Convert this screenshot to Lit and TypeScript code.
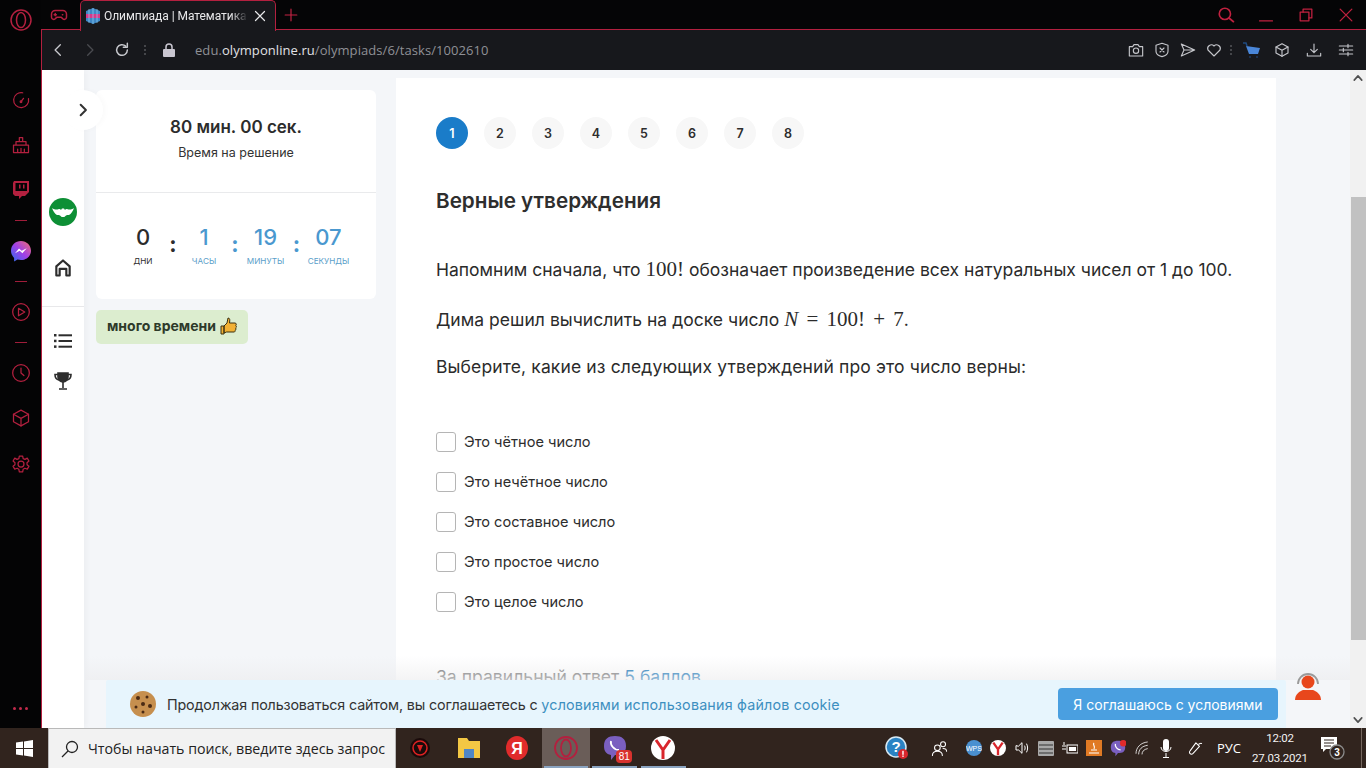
import { LitElement, html, svg, css } from "lit";
import { customElement } from "lit/decorators.js";

const ic = (w: number, body: any, vb = 24) =>
  html`<svg width="${w}" height="${w}" viewBox="0 0 ${vb} ${vb}" fill="none" stroke="currentColor" stroke-width="1.5" stroke-linecap="round" stroke-linejoin="round">${body}</svg>`;

const P = (d: string) => svg`<path d="${d}"></path>`;

const cubePath = svg`<path d="M12 2.5 21 7.5V16.5L12 21.500 3 16.5V7.5Z"></path><path d="M3 7.5 12 12.500 21 7.5M12 12.500V21.500"></path>`;

const gear = svg`<circle cx="12" cy="12" r="3.6"></circle><path d="M10 2.5h4l.6 3 2.2 1 2.7-1.500 2 3.400-2.300 2 .1 2.400 2.200 2-2 3.400-2.800-1.100-2.100 1.300-.6 3h-4l-.6-3-2.100-1.300-2.800 1.100-2-3.400 2.200-2 .1-2.400-2.300-2 2-3.400 2.700 1.500 2.200-1z"></path>`;

@customElement("app-root")
export class AppRoot extends LitElement {
  static styles = css`
    :host { display: block; width: 1366px; height: 768px; overflow: hidden; position: relative; font-family: "Inter", "Noto Sans", sans-serif; color: #2b2b2b; background: #050506; }
    * { box-sizing: border-box; }
    .browser { height: 728px; display: flex; }
    .rail { width: 41px; flex: none; background: #040405; color: #b3203f; display: flex; flex-direction: column; align-items: center; }
    .rail-logo { margin-top: 7px; height: 26px; color: #b3203f; }
    .rail-list { display: flex; flex-direction: column; align-items: center; margin-top: 44px; }
    .rail-item { height: 45px; width: 41px; display: flex; align-items: center; justify-content: center; }
    .rail-line { width: 12px; height: 1px; background: #a01d3a; }
    .rail-tall { height: 60px; width: 41px; display: flex; align-items: center; justify-content: center; }
    .rail-tw { height: 45px; margin-bottom: 8px; }
    .rail-cube { height: 30px; }
    .rail-gear { height: 62px; }
    .rail-dots { margin-top: auto; margin-bottom: 18px; display: flex; gap: 3px; }
    .rail-dots i { width: 3px; height: 3px; border-radius: 50%; background: #c22a4b; }
    .win { flex: 1; display: flex; flex-direction: column; min-width: 0; }
    .tabs { height: 30px; flex: none; display: flex; align-items: stretch; position: relative; }
    .tabs::after { content: ""; position: absolute; left: 0; right: 0; bottom: 0; height: 1px; background: #b3203f; }
    .game { width: 39px; display: flex; align-items: center; justify-content: center; color: #b3203f; padding-right: 3px; }
    .game svg { stroke-width: 2; }
    .tab { width: 196px; background: #17181c; border: 1px solid #b3203f; border-bottom: none; border-radius: 5px 5px 0 0; display: flex; align-items: center; padding: 0 6px 0 4px; position: relative; z-index: 1; font: 12px "Roboto", sans-serif; letter-spacing: -0.05px; color: #e8e8ea; white-space: nowrap; height: 31px; }
    .tab-t { width: 144px; overflow: hidden; margin-left: 3px; -webkit-mask-image: linear-gradient(90deg, #000 88%, transparent); mask-image: linear-gradient(90deg, #000 88%, transparent); }
    .tab-x { margin-left: 6px; color: #e8e8ea; display: flex; }
    .tab-x svg { stroke-width: 2.4; }
    .plus { width: 30px; display: flex; align-items: center; justify-content: center; color: #c32343; }
    .plus svg { stroke-width: 2; }
    .winbtns { margin-left: auto; display: flex; color: #c0213f; align-items: center; }
    .winbtn { width: 40px; height: 29px; display: flex; align-items: center; justify-content: center; }
    .winbtn svg { stroke-width: 2.2; }
    .addr { height: 40px; flex: none; background: #17181c; border-left: 1px solid #b3203f; color: #c8c9ce; display: flex; align-items: center; }
    .nav-b { width: 32px; display: flex; justify-content: center; }
    .nav-b svg { stroke-width: 2.2; }
    .dim { color: #4a4b50; }
    .vdots { width: 14px; display: flex; flex-direction: column; gap: 2px; align-items: center; }
    .vdots i { width: 2px; height: 2px; background: #45464a; }
    .lock { width: 34px; display: flex; justify-content: center; color: #c9c6d0; }
    .url { font: 13px "Open Sans", sans-serif; color: #8f9096; margin-left: 9px; letter-spacing: 0.07px; }
    .url b { font-weight: 400; color: #e2e2e6; }
    .tools { margin-left: auto; display: flex; align-items: center; color: #c5c6cb; padding-right: 4px; }
    .tool { width: 26px; display: flex; justify-content: center; }
    .tool svg { stroke-width: 1.7; }
    .tool.w { width: 32px; }
    .tool.cart { width: 28px; margin-left: 3px; }
    .vdots.sm { width: 8px; }
    .page { flex: 1; min-height: 0; display: flex; position: relative; border-left: 1px solid #b3203f; background: #f4f6f9; overflow: hidden; }
    .side { width: 42px; flex: none; background: #fff; display: flex; flex-direction: column; align-items: center; box-shadow: 2px 0 6px rgba(0,0,0,.04); color: #2d2d2d; }
    .ava { width: 28px; height: 28px; border-radius: 50%; background: #0d8f35; margin-top: 128px; display: flex; align-items: center; justify-content: center; }
    .side-home { margin-top: 30px; height: 24px; display: flex; align-items: center; }
    .side-home svg { stroke-width: 2.6; }
    .side-div { width: 100%; height: 1px; background: #e8e8ea; margin-top: 26px; }
    .side-list { margin-top: 24px; height: 20px; display: flex; align-items: center; }
    .side-cup { margin-top: 21px; display: flex; }
    .bubble { position: absolute; left: 21px; top: 20px; width: 40px; height: 40px; border-radius: 50%; background: #fff; display: flex; align-items: center; justify-content: center; box-shadow: 3px 0 5px rgba(0,0,0,.02); z-index: 2; color: #333; }
    .bubble svg { stroke-width: 3.4; }
    .col { width: 280px; margin-left: 12px; padding-top: 20px; flex: none; }
    .card { background: #fff; border-radius: 6px; height: 209px; }
    .card-top { height: 103px; border-bottom: 1px solid #e9eaec; padding-top: 25px; text-align: center; }
    .time { font-size: 17px; line-height: 24px; font-weight: 600; color: #2c2c2c; }
    .time-s { font-size: 12.500px; line-height: 18px; margin-top: 5px; color: #333; }
    .count { display: grid; grid-template-columns: 30px 30px 32px 30px 31px 31px 33px 30px; justify-content: start; padding: 30px 0 0 32px; align-items: start; }
    .cell { display: flex; flex-direction: column; align-items: center; justify-self: center; width: 30px; }
    .num { font-size: 22px; line-height: 28px; font-weight: 500; color: #2c2c2c; }
    .lab { font-size: 8.200px; line-height: 12px; margin-top: 4px; white-space: nowrap; text-transform: uppercase; color: #2c2c2c; }
    .blue .num { color: #4a98cf; }
    .blue .lab { color: #5a9ec9; }
    .colon { font-size: 22px; font-weight: 700; line-height: 28px; text-align: center; padding-top: 7px; color: #2c2c2c; }
    .colon.blue { color: #4a98cf; }
    .badge { margin-top: 11px; width: 152px; height: 34px; background: #dcedcf; border-radius: 5px; display: flex; align-items: center; gap: 4px; padding: 0 0 3px 11px; font-size: 14px; font-weight: 700; color: #2e3a2a; white-space: nowrap; }
    .task { width: 880px; margin-left: 20px; margin-top: 8px; flex: none; background: #fff; padding: 39px 40px 0; }
    .steps { display: flex; gap: 16px; }
    .step { width: 32px; height: 32px; border-radius: 50%; background: #f7f7f7; display: flex; align-items: center; justify-content: center; font-size: 12.500px; font-weight: 600; color: #2d2d2d; }
    .step.on { background: #1a7cc9; color: #fff; }
    h1 { margin: 37px 0 0; font-size: 20.700px; line-height: 30px; font-weight: 600; color: #2e2e2e; }
    .p { font-size: 17.500px; line-height: 28px; color: #2b2b2b; white-space: nowrap; letter-spacing: 0.03px; }
    .p .m { font-family: "Liberation Serif", serif; font-size: 21px; letter-spacing: 0; word-spacing: 3px; }
    .p1 { margin-top: 39px; letter-spacing: 0; }
    .p2 { margin-top: 21px; }
    .p3 { margin-top: 19px; letter-spacing: 0.13px; }
    .opts { margin-top: 51px; display: flex; flex-direction: column; gap: 20px; }
    .opt { display: flex; align-items: center; gap: 8px; height: 20px; font-size: 14.600px; color: #2d2d2d; }
    .box { width: 20px; height: 20px; border: 1px solid #b5b5b5; border-radius: 3px; background: #fff; }
    .foot { margin-top: 53px; font-size: 17.600px; line-height: 24px; color: #6a6a6a; white-space: nowrap; }
    .foot span { color: #0a6fb5; }
    .fade { position: absolute; left: 43px; right: 16px; bottom: 48px; height: 24px; background: linear-gradient(rgba(240,240,240,0), rgba(236,236,238,.6)); pointer-events: none; }
    .cookie { position: absolute; left: 64px; bottom: 0; width: 1180px; height: 48px; background: #e7f5fd; display: flex; align-items: center; padding: 0 8px 0 24px; font-size: 14.300px; color: #333; border-radius: 2px 2px 0 0; }
    .cookie-t { margin-left: 11px; white-space: nowrap; letter-spacing: -0.14px; }
    .cookie-t a { color: #3d8fc0; letter-spacing: 0.19px; }
    .agree { margin-left: auto; width: 220px; height: 32px; background: #4a9fe0; color: #fff; border-radius: 4px; display: flex; align-items: center; justify-content: center; font-size: 14px; }
    .support { position: absolute; left: 1252px; top: 599px; display: flex; }
    .sb { width: 16px; flex: none; margin-left: auto; background: #f1f1f1; display: flex; flex-direction: column; align-items: center; color: #505050; }
    .sb-u { height: 16px; display: flex; align-items: center; }
    .sb-u svg, .sb-d svg { stroke-width: 4; }
    .sb-gap { height: 111px; }
    .sb-th { width: 15px; height: 443px; background: #c1c1c1; }
    .sb-d { margin-top: auto; height: 16px; display: flex; align-items: center; }
    .bar { height: 40px; background: #31241e; display: flex; align-items: stretch; color: #fff; }
    .start { width: 48px; display: flex; align-items: center; justify-content: center; }
    .search { width: 348px; background: #f2f2f2; border: 1px solid #b9b9b9; border-bottom: none; display: flex; align-items: center; padding-left: 12px; gap: 9px; color: #222; font: 14.200px "Open Sans", sans-serif; white-space: nowrap; overflow: hidden; }
    .apps { display: flex; }
    .app { width: 48.600px; display: flex; align-items: center; justify-content: center; position: relative; }
    .app.open::after { content: ""; position: absolute; left: 2px; right: 2px; bottom: 0; height: 2px; background: #8aa3c0; }
    .app.act { background: #6a5d58; }
    .bdg { position: absolute; left: 26px; top: 22px; width: 16px; height: 13px; border-radius: 4px; background: #d8322e; color: #fff; font: 10px "Liberation Sans", sans-serif; text-align: center; line-height: 13px; }
    .tray { margin-left: auto; display: flex; align-items: center; padding-right: 4px; }
    .t { width: 24px; display: flex; justify-content: center; align-items: center; position: relative; }
    .t-help { margin-right: 18px; }
    .t-ppl { margin-right: 11px; }
    .t-pen { width: 32px; }
    .t-lang { width: 38px; font: 13px "Open Sans", sans-serif; text-align: center; }
    .clock { width: 64px; margin-right: 6px; text-align: center; font: 11.500px/20px "Roboto", sans-serif; letter-spacing: -0.2px; color: #f2f2f2; white-space: nowrap; }
    .t-note { width: 30px; }
    .desk { width: 1px; height: 40px; background: #75675f; margin-left: 13px; }
  `;

  private sideIcons() {
    return html`
      <div class="rail-list">
        <div class="rail-item">${ic(20, svg`<path d="M14 3.300a9 9 0 1 0 7 7"></path><path d="M12 14l3-4"></path><circle cx="12" cy="14" r="1"></circle>`)}</div>
        <div class="rail-item">${ic(20, svg`<path d="M3 21V12h18v9zM6 12V8h12v4M10 8V3h4v5M8 21v-4M12 21v-5M16 21v-4"></path>`)}</div>
        <div class="rail-item rail-tw">
          <svg width="18" height="20" viewBox="0 0 18 20"><path fill="#b3203f" d="M2 1h15v11l-4 4h-3l-3 3v-3H3L1 14V3z"></path><rect x="3.500" y="3" width="11.500" height="8" fill="#040405"></rect><rect x="7" y="4.500" width="1.500" height="4" fill="#b3203f"></rect><rect x="11" y="4.500" width="1.500" height="4" fill="#b3203f"></rect></svg>
        </div>
        <div class="rail-line"></div>
        <div class="rail-tall">
          <svg width="20" height="21" viewBox="0 0 20 21"><defs><linearGradient id="ms" x1="0" y1="1" x2="1" y2="0"><stop offset="0" stop-color="#2b6ff0"></stop><stop offset=".5" stop-color="#a040e8"></stop><stop offset="1" stop-color="#f36f70"></stop></linearGradient></defs><path fill="url(#ms)" d="M10 0C4.400 0 0 4.100 0 9.700c0 2.900 1.200 5.400 3.100 7.200V20.500l3.400-1.900c1.100.3 2.300.5 3.500.5 5.600 0 10-4.100 10-9.400S15.600 0 10 0z"></path><path fill="#fff" d="M4 12.300 8 7.500l2.700 2.300L15.700 7.200l-4.300 5-2.700-2.400z"></path></svg>
        </div>
        <div class="rail-line"></div>
        <div class="rail-tall">${ic(20, svg`<circle cx="12" cy="12" r="10"></circle><path d="M9 7.500 16.500 12 9 16.500z"></path>`)}</div>
        <div class="rail-line"></div>
        <div class="rail-tall">${ic(20, svg`<circle cx="12" cy="12" r="10"></circle><path d="M12 6v6l3.500 3"></path>`)}</div>
        <div class="rail-item rail-cube">${ic(20, cubePath)}</div>
        <div class="rail-item rail-gear">${ic(20, gear)}</div>
      </div>
      <div class="rail-dots"><i></i><i></i><i></i></div>`;
  }

  render() {
    const opts = ["Это чётное число", "Это нечётное число", "Это составное число", "Это простое число", "Это целое число"];
    const steps = [1, 2, 3, 4, 5, 6, 7, 8];
    return html`
      <div class="browser">
        <div class="rail">
          <div class="rail-logo">
            <svg width="26" height="26" viewBox="0 0 26 26" fill="none" stroke="#b3203f" stroke-width="1.500"><circle cx="13" cy="13" r="10"></circle><ellipse cx="13" cy="13" rx="4.500" ry="7.500"></ellipse></svg>
          </div>
          ${this.sideIcons()}
        </div>
        <div class="win">
          <div class="tabs">
            <div class="game">${ic(18, svg`<path d="M7 6h10a5 5 0 0 1 5 5v4a3 3 0 0 1-5.500 1.500L15 15H9l-1.500 1.500A3 3 0 0 1 2 15v-4a5 5 0 0 1 5-5z"></path><path d="M7 10v3M5.500 11.500h3M16.500 11.500h.5"></path>`)}</div>
            <div class="tab">
              <svg width="16" height="16" viewBox="0 0 16 16"><path fill="#3e86c5" d="M8 0l7 3v10l-7 3-7-3V3z"></path><rect x="1" y="6" width="14" height="4" fill="#d8388a"></rect><path stroke="#8fd0f0" stroke-width=".7" d="M4 1v14M8 0v16M12 1v14"></path></svg>
              <div class="tab-t">Олимпиада | Математика</div>
              <div class="tab-x">${ic(12, P("M3 3 21 21M21 3 3 21"))}</div>
            </div>
            <div class="plus">${ic(14, P("M12 2v20M2 12h20"))}</div>
            <div class="winbtns">
              <div class="winbtn">${ic(18, svg`<circle cx="10.500" cy="10.500" r="7.500"></circle><path d="M16 16l6 5"></path>`)}</div>
              <div class="winbtn">${ic(14, P("M1 22h22"))}</div>
              <div class="winbtn">${ic(14, svg`<rect x="2" y="7" width="15" height="15"></rect><path d="M7 7V2h15v15h-5"></path>`)}</div>
              <div class="winbtn">${ic(14, P("M2 2 22 22M22 2 2 22"))}</div>
            </div>
          </div>
          <div class="addr">
            <div class="nav-b">${ic(14, P("M16 3 7 12l9 9"))}</div>
            <div class="nav-b dim">${ic(14, P("M8 3l9 9-9 9"))}</div>
            <div class="nav-b">${ic(16, svg`<path d="M20 12a8 8 0 1 1-2.500-5.800"></path><path d="M20 2v6h-6"></path>`)}</div>
            <div class="vdots"><i></i><i></i><i></i></div>
            <div class="lock">
              <svg width="12" height="14" viewBox="0 0 12 14"><path fill="none" stroke="currentColor" stroke-width="1.500" d="M3 7V4a3 3 0 0 1 6 0v3"></path><rect y="6" width="12" height="8" rx="1" fill="currentColor"></rect></svg>
            </div>
            <div class="url">edu.<b>olymponline.ru</b>/olympiads/6/tasks/1002610</div>
            <div class="tools">
              <div class="tool">${ic(16, svg`<path d="M2 7h5l2-3h6l2 3h5v14H2z"></path><circle cx="12" cy="13" r="4"></circle>`)}</div>
              <div class="tool">${ic(16, svg`<path d="M12 2l9 3v9c0 4-4 7-9 8-5-1-9-4-9-8V5z"></path><path d="M9 9l6 6M15 9l-6 6"></path>`)}</div>
              <div class="tool">${ic(16, P("M2 3l20 9-20 9 4-9zM6 12h16"))}</div>
              <div class="tool">${ic(16, P("M12 21 3 12a5.500 5.500 0 0 1 9-6 5.500 5.500 0 0 1 9 6z"))}</div>
              <div class="vdots sm"><i></i><i></i><i></i></div>
              <div class="tool cart">
                <svg width="18" height="16" viewBox="0 0 18 16"><path fill="#4a86d8" d="M3 4l14 2-2 6H6z"></path><path stroke="#1f4a80" stroke-width="1.500" fill="none" d="M0 1h3l1 3"></path><circle cx="7" cy="15" r="1" fill="#1f3a60"></circle><circle cx="14" cy="15" r="1" fill="#1f3a60"></circle></svg>
              </div>
              <div class="tool w">${ic(16, cubePath)}</div>
              <div class="tool w">${ic(16, P("M12 3v13M7 11l5 5 5-5M2 17v4h20v-4"))}</div>
              <div class="tool w">${ic(16, P("M2 6h20M2 12h20M2 18h20M15 3.500v5M8 9.500v5M15 15.500v5"))}</div>
            </div>
          </div>
          <div class="page">
            <div class="side">
              <div class="ava">
                <svg width="22" height="10" viewBox="0 0 22 10"><path fill="#fff" d="M0 1c2 1.500 4 2 7 1 .8-.3 1.500.3 2 1l1-1.500h2l1 1.500c.5-.7 1.200-1.300 2-1 3 1 5 .5 7-1-1 3-3 6-5 7-2 0-2 0-3 .5-1 1-2 2-3 2s-2-1-3-2c-1-.5-1-.5-3-.5C3 7 1 4 0 1z"></path></svg>
              </div>
              <div class="side-home">${ic(20, P("M4 21V10l8-7 8 7v11h-4v-8H8v8z"))}</div>
              <div class="side-div"></div>
              <div class="side-list">
                <svg width="18" height="14" viewBox="0 0 18 14" fill="#2d2d2d"><rect width="2.500" height="2.500" y="0"></rect><rect x="4.500" y=".3" width="13.500" height="2"></rect><rect width="2.500" height="2.500" y="5.700"></rect><rect x="4.500" y="6" width="13.500" height="2"></rect><rect width="2.500" height="2.500" y="11.400"></rect><rect x="4.500" y="11.700" width="13.500" height="2"></rect></svg>
              </div>
              <div class="side-cup">
                <svg width="18" height="18" viewBox="0 0 18 18" fill="none" stroke="#2d2d2d" stroke-width="1.600"><path fill="#2d2d2d" d="M4 1h10v4a5 5 0 0 1-10 0z"></path><path d="M4 2.500H1c0 3 1 5 4 5.500M14 2.500h3c0 3-1 5-4 5.500M9 10v6M5 17h8"></path></svg>
              </div>
            </div>
            <div class="bubble">${ic(14, P("M8 3l9 9-9 9"))}</div>
            <div class="col">
              <div class="card">
                <div class="card-top">
                  <div class="time">80 мин. 00 сек.</div>
                  <div class="time-s">Время на решение</div>
                </div>
                <div class="count">
                  <div class="cell"><div class="num">0</div><div class="lab">дни</div></div>
                  <div class="colon">:</div>
                  <div class="cell blue"><div class="num">1</div><div class="lab">часы</div></div>
                  <div class="colon blue">:</div>
                  <div class="cell blue"><div class="num">19</div><div class="lab">минуты</div></div>
                  <div class="colon blue">:</div>
                  <div class="cell blue"><div class="num">07</div><div class="lab">секунды</div></div>
                </div>
              </div>
              <div class="badge">много времени
                <svg width="17" height="18" viewBox="0 0 17 18"><path fill="#f2b134" stroke="#3a3010" stroke-width="1" d="M1 9h3v8H1zM4 9l3-3 1-5c2 0 2 2 1.500 5H15c1.500 0 1.500 2 .8 2.500.8.500.8 2-.2 2.500.5.500.5 2-.5 2.300.3.800-.2 1.700-1.100 1.700H6.500L4 16z"></path></svg>
              </div>
            </div>
            <div class="task">
              <div class="steps">${steps.map((s) => html`<div class="step ${s === 1 ? "on" : ""}">${s}</div>`)}</div>
              <h1>Верные утверждения</h1>
              <div class="p p1">Напомним сначала, что <span class="m">100!</span> обозначает произведение всех натуральных чисел от 1 до 100.</div>
              <div class="p p2">Дима решил вычислить на доске число <span class="m"><i>N</i> = 100! + 7</span>.</div>
              <div class="p p3">Выберите, какие из следующих утверждений про это число верны:</div>
              <div class="opts">${opts.map((o) => html`<div class="opt"><div class="box"></div><span>${o}</span></div>`)}</div>
              <div class="foot">За правильный ответ <span>5 баллов</span></div>
            </div>
            <div class="sb">
              <div class="sb-u">${ic(10, P("M3 17 12 7l9 10"))}</div>
              <div class="sb-gap"></div>
              <div class="sb-th"></div>
              <div class="sb-d">${ic(10, P("M3 7l9 10 9-10"))}</div>
            </div>
            <div class="fade"></div>
            <div class="cookie">
              <svg width="26" height="26" viewBox="0 0 26 26"><circle cx="13" cy="13" r="13" fill="#c68f4e"></circle><circle cx="8" cy="7" r="2" fill="#4a2a14"></circle><circle cx="17" cy="6" r="1.500" fill="#4a2a14"></circle><circle cx="13" cy="13" r="2" fill="#4a2a14"></circle><circle cx="6" cy="16" r="1.500" fill="#4a2a14"></circle><circle cx="20" cy="15" r="2" fill="#4a2a14"></circle><circle cx="13" cy="21" r="1.500" fill="#4a2a14"></circle></svg>
              <div class="cookie-t">Продолжая пользоваться сайтом, вы соглашаетесь с <a>условиями использования файлов cookie</a></div>
              <div class="agree">Я соглашаюсь с условиями</div>
            </div>
            <div class="support">
              <svg width="28" height="32" viewBox="0 0 28 32"><path d="M4 15a10 10 0 1 1 20 0" fill="none" stroke="#9a9a9a" stroke-width="1.800"></path><circle cx="14" cy="13" r="6.500" fill="#e8471c"></circle><path fill="#e8471c" d="M1 31c0-6 5-9 8-10h10c3 1 8 4 8 10z"></path></svg>
            </div>
          </div>
        </div>
      </div>
      <div class="bar">
        <div class="start">
          <svg width="17" height="17" viewBox="0 0 17 17" fill="#fff"><path d="M0 2.500 7 1.500V8H0zM8 1.400 17 0V8H8zM0 9h7v6.500L0 14.500zM8 9h9v8L8 15.600z"></path></svg>
        </div>
        <div class="search">
          <svg width="18" height="18" viewBox="0 0 18 18" fill="none" stroke="#222" stroke-width="1.300"><circle cx="11" cy="7" r="5.500"></circle><path d="M7 11 1 17"></path></svg>
          <span>Чтобы начать поиск, введите здесь запрос</span>
        </div>
        <div class="apps">
          <div class="app">
            <svg width="20" height="20" viewBox="0 0 20 20"><circle cx="10" cy="10" r="10" fill="#1a0b0b"></circle><circle cx="10" cy="10" r="7" fill="none" stroke="#d22" stroke-width="1.500"></circle><path d="M7 7h6l-3 7z" fill="#d22"></path></svg>
          </div>
          <div class="app">
            <svg width="22" height="20" viewBox="0 0 22 20"><path fill="#f3c744" d="M0 0h9l2 3h11v17H0z"></path><rect x="6" y="11" width="10" height="9" fill="#4f86c6"></rect></svg>
          </div>
          <div class="app">
            <svg width="22" height="24" viewBox="0 0 22 24"><ellipse cx="11" cy="12" rx="11" ry="12" fill="#e02b2b"></ellipse><text x="11" y="18" text-anchor="middle" fill="#fff" font-family="Liberation Sans" font-size="16" font-weight="700">Я</text></svg>
          </div>
          <div class="app act open">
            <svg width="26" height="26" viewBox="0 0 26 26" fill="none" stroke="#b3203f" stroke-width="1.800"><circle cx="13" cy="13" r="11"></circle><ellipse cx="13" cy="13" rx="5" ry="8.500"></ellipse></svg>
          </div>
          <div class="app open">
            <svg width="24" height="26" viewBox="0 0 24 26"><path fill="#7a5fc0" d="M12 1c7 0 11 3 11 10s-4 9-11 9l-4 5v-5C3 19 1 16 1 11 1 4 5 1 12 1z"></path><path fill="none" stroke="#fff" stroke-width="1.800" d="M8 6c-1 4 3 9 8 9"></path></svg>
            <div class="bdg">81</div>
          </div>
          <div class="app open">
            <svg width="24" height="24" viewBox="0 0 24 24"><circle cx="12" cy="12" r="12" fill="#fff"></circle><path fill="none" stroke="#d9262c" stroke-width="3" d="M5 4l7 10 7-10M12 14v9"></path></svg>
          </div>
        </div>
        <div class="tray">
          <div class="t t-help">
            <svg width="24" height="24" viewBox="0 0 24 24"><circle cx="11" cy="11" r="10" fill="#2a83c4" stroke="#d8eaf5" stroke-width="1.500"></circle><text x="11" y="16" text-anchor="middle" font-family="Liberation Sans" font-size="15" font-weight="700" fill="#fff">?</text><circle cx="18" cy="18" r="5" fill="#d8262c"></circle><rect x="17.300" y="14.800" width="1.400" height="4" fill="#fff"></rect><rect x="17.300" y="19.500" width="1.400" height="1.400" fill="#fff"></rect></svg>
          </div>
          <div class="t t-ppl">${ic(17, svg`<circle cx="9" cy="11" r="4"></circle><path d="M2 22c0-4 3-6 7-6s7 2 7 6"></path><circle cx="17" cy="6" r="3.500"></circle><path d="M17 12c3 0 5 2 5 4"></path>`)}</div>
          <div class="t"><svg width="16" height="16" viewBox="0 0 16 16"><circle cx="8" cy="8" r="8" fill="#4a90d0"></circle><text x="8" y="11" text-anchor="middle" font-family="Liberation Sans" font-size="7" fill="#fff">WPS</text></svg></div>
          <div class="t"><svg width="16" height="16" viewBox="0 0 24 24"><circle cx="12" cy="12" r="12" fill="#fff"></circle><path fill="none" stroke="#d9262c" stroke-width="3.500" d="M5 4l7 10 7-10M12 14v9"></path></svg></div>
          <div class="t">${ic(16, svg`<path d="M3 9v6h4l5 5V4L7 9z"></path><path d="M16 9c1 2 1 4 0 6M19 6c2 4 2 8 0 12"></path>`)}</div>
          <div class="t"><svg width="16" height="15" viewBox="0 0 16 15"><rect width="16" height="15" rx="1" fill="#a8a8a8"></rect><path stroke="#333" d="M1 4h14M1 8h14M1 12h14"></path></svg></div>
          <div class="t"><svg width="16" height="12" viewBox="0 0 16 12"><rect x="5" y="3" width="11" height="8" fill="none" stroke="#fff"></rect><rect x="7" y="5" width="7" height="4" fill="#fff"></rect><path stroke="#fff" d="M0 4h4M0 7h4M2 0v3"></path></svg></div>
          <div class="t"><svg width="16" height="16" viewBox="0 0 16 16"><rect width="16" height="16" fill="#e07a24"></rect><path stroke="#fff" stroke-width="1.200" fill="none" d="M3 13h10M5 10h6M8 3c-2 2 2 3 0 6"></path></svg></div>
          <div class="t"><svg width="16" height="17" viewBox="0 0 24 26"><path fill="#7a5fc0" d="M12 1c7 0 11 3 11 10s-4 9-11 9l-4 5v-5C3 19 1 16 1 11 1 4 5 1 12 1z"></path><path fill="none" stroke="#fff" stroke-width="2" d="M8 6c-1 4 3 9 8 9"></path><circle cx="20" cy="5" r="5" fill="#e02b2b"></circle></svg></div>
          <div class="t">${ic(16, svg`<path d="M3 20c0-9 7-16 17-17M7 21c0-7 5-12 13-13M12 21c0-4 3-7 8-8" stroke-width="1.200"></path>`)}</div>
          <div class="t"><svg width="12" height="19" viewBox="0 0 12 19"><rect x="3" y="0" width="6" height="12" rx="3" fill="#fff"></rect><path d="M1 8c0 6 10 6 10 0M6 14v4M3 18.500h6" stroke="#fff" fill="none"></path></svg></div>
          <div class="t t-pen">${ic(17, svg`<path d="M14 4l5 5-9 10c-3 3-7-1-4-4z"></path><path d="M18 6c2-1 3-2 4-1"></path>`)}</div>
          <div class="t t-lang">РУС</div>
          <div class="clock">12:02<br />27.03.2021</div>
          <div class="t t-note">
            <svg width="26" height="26" viewBox="0 0 26 26"><path fill="#fff" d="M1 2h16v12H6l-3 3v-3H1z"></path><path stroke="#31241e" stroke-width="1.200" d="M4 5h10M4 8h10M4 11h7"></path><circle cx="17" cy="17" r="7" fill="#31241e" stroke="#8a8a8a" stroke-width="1.300"></circle><text x="17" y="21" text-anchor="middle" fill="#fff" font-family="Liberation Sans" font-size="10" font-weight="700">3</text></svg>
          </div>
          <div class="desk"></div>
        </div>
      </div>
    `;
  }
}
